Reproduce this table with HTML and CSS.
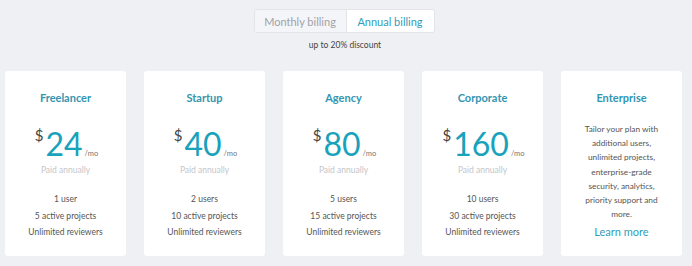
FILE: index.html
```html
<!DOCTYPE html>
<html>
<head>
<meta charset="utf-8">
<link rel="stylesheet" href="styles.css">
</head>
<body>
<div class="page">
  <div class="billing">
    <div class="toggle">
      <span class="opt">Monthly billing</span>
      <span class="opt active">Annual billing</span>
    </div>
    <div class="discount">up to 20% discount</div>
  </div>
  <div class="plans">
    <div class="card">
      <div class="title">Freelancer</div>
      <div class="price"><span class="cur">$</span><span class="amt">24</span><span class="per">/mo</span></div>
      <div class="paid">Paid annually</div>
      <ul class="feats"><li>1 user</li><li>5 active projects</li><li>Unlimited reviewers</li></ul>
    </div>
    <div class="card">
      <div class="title">Startup</div>
      <div class="price"><span class="cur">$</span><span class="amt">40</span><span class="per">/mo</span></div>
      <div class="paid">Paid annually</div>
      <ul class="feats"><li>2 users</li><li>10 active projects</li><li>Unlimited reviewers</li></ul>
    </div>
    <div class="card">
      <div class="title">Agency</div>
      <div class="price"><span class="cur">$</span><span class="amt">80</span><span class="per">/mo</span></div>
      <div class="paid">Paid annually</div>
      <ul class="feats"><li>5 users</li><li>15 active projects</li><li>Unlimited reviewers</li></ul>
    </div>
    <div class="card">
      <div class="title">Corporate</div>
      <div class="price"><span class="cur">$</span><span class="amt">160</span><span class="per">/mo</span></div>
      <div class="paid">Paid annually</div>
      <ul class="feats"><li>10 users</li><li>30 active projects</li><li>Unlimited reviewers</li></ul>
    </div>
    <div class="card">
      <div class="title">Enterprise</div>
      <p class="desc">Tailor your plan with additional users, unlimited projects, enterprise-grade security, analytics, priority support and more.</p>
      <a class="learn">Learn more</a>
    </div>
  </div>
</div>
</body>
</html>
```
FILE: styles.css
```css
html, body {
  margin: 0;
  padding: 0;
  background: #eff0f4;
  font-family: "Lato", "Open Sans", sans-serif;
  color: #555;
}
.page {
  width: 692px;
  height: 266px;
  padding-top: 9px;
  box-sizing: border-box;
}
.billing {
  display: flex;
  flex-direction: column;
  align-items: center;
}
.toggle {
  display: flex;
  height: 24px;
  border: 1px solid #e2e4e9;
  border-radius: 3px;
  box-sizing: border-box;
  overflow: hidden;
  margin-left: -4px;
}
.opt {
  display: flex;
  align-items: center;
  justify-content: center;
  font-size: 11px;
  color: #a0a2a8;
  background: #f4f5f8;
  width: 91px;
}
.opt.active {
  width: 87px;
  background: #fff;
  color: #2f9db8;
  border-left: 1px solid #e2e4e9;
}
.discount {
  margin-top: 7px;
  font-size: 8.5px;
  color: #444;
  margin-left: -2px;
}
.plans {
  display: flex;
  gap: 18px;
  padding-left: 5px;
  margin-top: 21px;
}
.card {
  width: 121px;
  height: 185px;
  background: #fff;
  border-radius: 3px;
  display: flex;
  flex-direction: column;
  align-items: center;
  box-sizing: border-box;
  padding-top: 20px;
}
.title {
  font-size: 11px;
  font-weight: 700;
  color: #3296b0;
  line-height: 14px;
}
.price {
  display: flex;
  align-items: flex-start;
  margin-top: 24px;
  height: 34px;
  margin-left: 2px;
}
.cur {
  font-size: 15px;
  color: #444;
  line-height: 15px;
  margin-top: -1px;
  margin-right: 2px;
}
.amt {
  font-size: 32px;
  color: #18a2bc;
  line-height: 30px;
  font-weight: 400;
}
.per {
  font-size: 7.5px;
  color: #777;
  align-self: flex-end;
  margin-bottom: 5px;
  margin-left: 2px;
}
.paid {
  font-size: 8.5px;
  color: #c4c6ca;
  margin-top: 1px;
  line-height: 12px;
}
.feats {
  list-style: none;
  margin: 15px 0 0;
  padding: 0;
  text-align: center;
  font-size: 8.5px;
  color: #555;
}
.feats li {
  line-height: 16.5px;
}
.desc {
  margin: 17px 0 0;
  padding: 0 16px;
  text-align: center;
  font-size: 8.3px;
  line-height: 14.2px;
  color: #555;
}
.learn {
  margin-top: 4px;
  font-size: 11px;
  color: #2f9db8;
}
```
